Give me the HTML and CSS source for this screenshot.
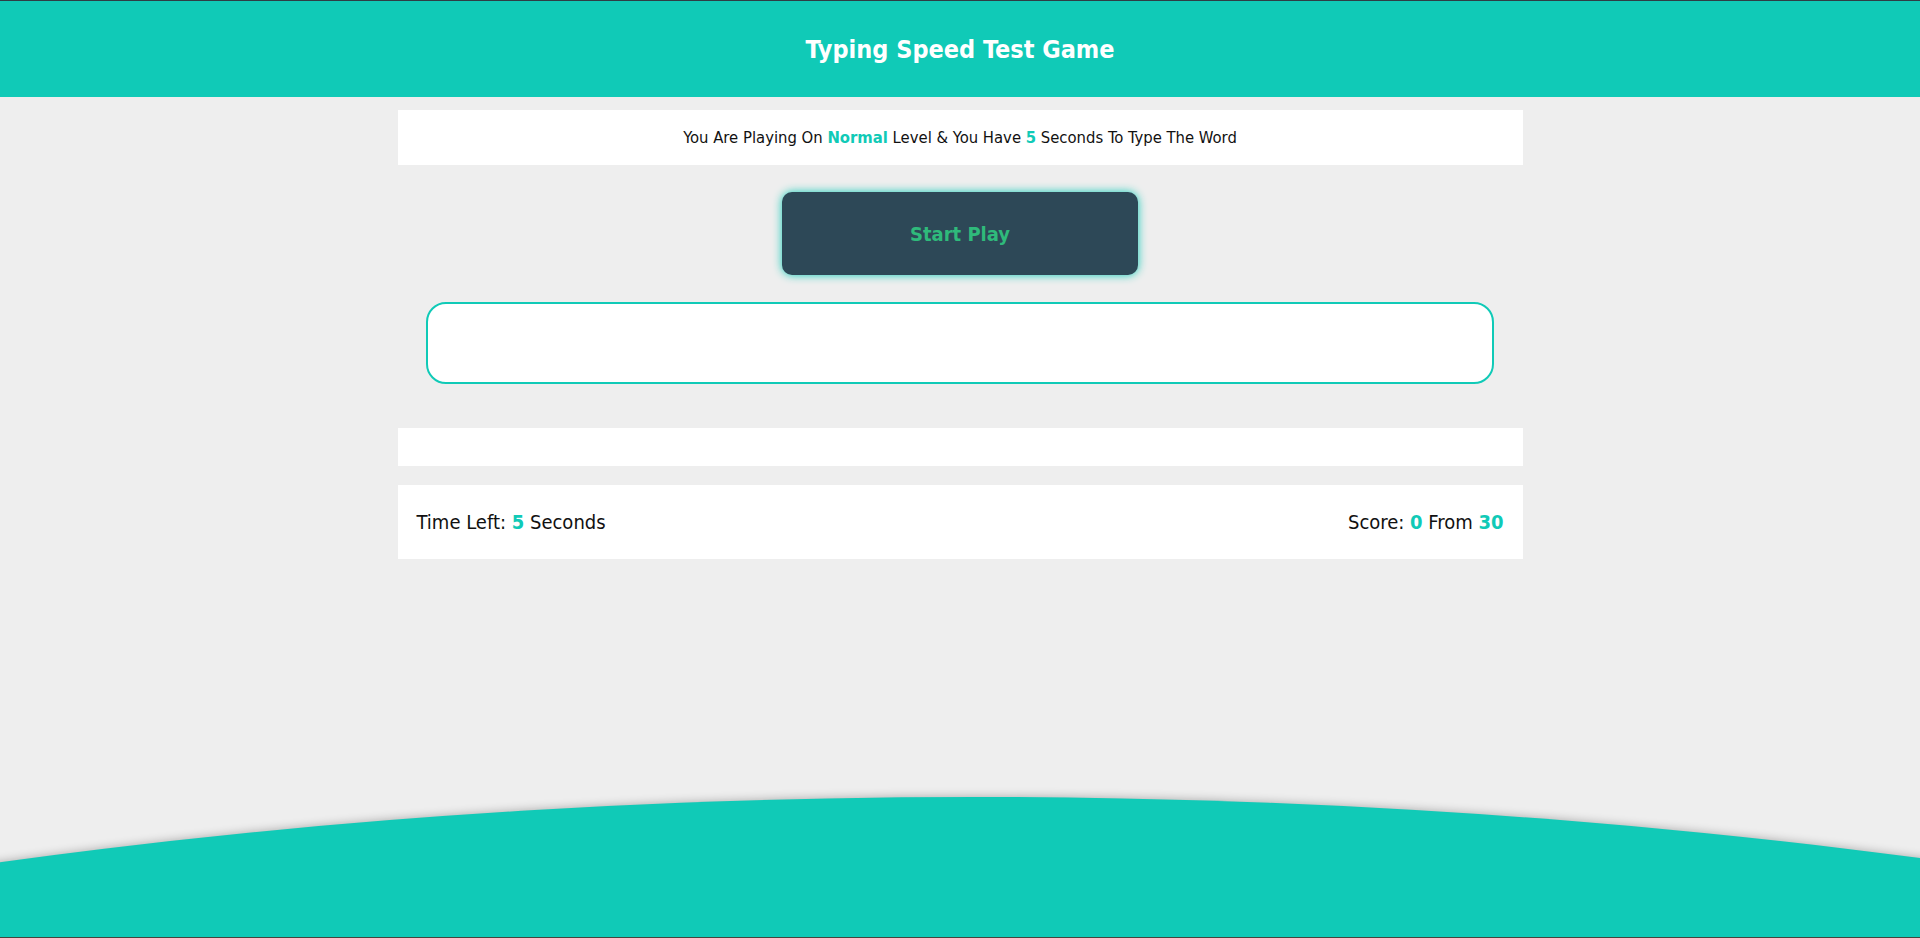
FILE: index.html
```html
<!DOCTYPE html>
<html lang="en">
<head>
<meta charset="utf-8">
<title>Typing Speed Test Game</title>
<link rel="stylesheet" href="styles.css">
</head>
<body>
  <header class="top">
    <h1 class="title">Typing Speed Test Game</h1>
  </header>
  <main class="game">
    <div class="message">You Are Playing On <span class="lvl">Normal</span> Level &amp; You Have <span class="seconds">5</span> Seconds To Type The Word</div>
    <div class="start">Start Play</div>
    <div class="the-word"></div>
    <input class="input" type="text" aria-label="Type the word">
    <div class="upcoming-words"></div>
    <div class="control">
      <div class="time">Time Left: <span>5</span> Seconds</div>
      <div class="score">Score: <span>0</span> From <span>30</span></div>
    </div>
  </main>
  <footer class="footer"></footer>
</body>
</html>
```
FILE: styles.css
```css
* {
  box-sizing: border-box;
}

html,
body {
  height: 100%;
}

body {
  margin: 0;
  position: relative;
  overflow: hidden;
  background-color: #eeeeee;
  font-family: "DejaVu Sans Condensed", "DejaVu Sans", sans-serif;
  color: #111;
}

.top {
  height: 97px;
  background-color: #10cab7;
  border-top: 1px solid #2f3d45;
  display: flex;
  align-items: center;
  justify-content: center;
}

.title {
  margin: 0;
  color: #fff;
  font-size: 25px;
  font-weight: bold;
  line-height: 1;
}

.game {
  width: 1125px;
  margin: 13px auto 0;
}

.message {
  height: 55px;
  background-color: #fff;
  display: flex;
  align-items: center;
  justify-content: center;
  font-size: 16.5px;
  white-space: pre;
}

.message span {
  color: #10cab7;
  font-weight: bold;
}

.start {
  width: 356px;
  height: 83px;
  margin: 27px auto 0;
  background-color: #2d4857;
  color: #2fba7b;
  border-radius: 10px;
  box-shadow: 0 0 10px #10cab7;
  display: flex;
  align-items: center;
  justify-content: center;
  font-size: 20px;
  font-weight: bold;
}

.the-word {
  display: none;
}

.input {
  display: block;
  width: 95%;
  height: 82px;
  margin: 27px auto 0;
  border: 2px solid #10cab7;
  border-radius: 20px;
  background-color: #fff;
  outline: none;
}

.upcoming-words {
  height: 38px;
  margin-top: 44px;
  background-color: #fff;
}

.control {
  height: 74px;
  margin-top: 19px;
  padding: 0 19px;
  background-color: #fff;
  display: flex;
  align-items: center;
  justify-content: space-between;
  font-size: 20px;
}

.control span {
  color: #10cab7;
  font-weight: bold;
}

.footer {
  position: absolute;
  left: 0;
  right: 0;
  bottom: 0;
  height: 161px;
  overflow: hidden;
  border-bottom: 1px solid #45453d;
}

.footer::before {
  content: "";
  position: absolute;
  top: 20px;
  left: calc(50% - 2985px);
  width: 6000px;
  height: 2400px;
  border-radius: 50%;
  background-color: #10cab7;
  box-shadow: 0 0 10px rgba(0, 0, 0, 0.3);
}
```
